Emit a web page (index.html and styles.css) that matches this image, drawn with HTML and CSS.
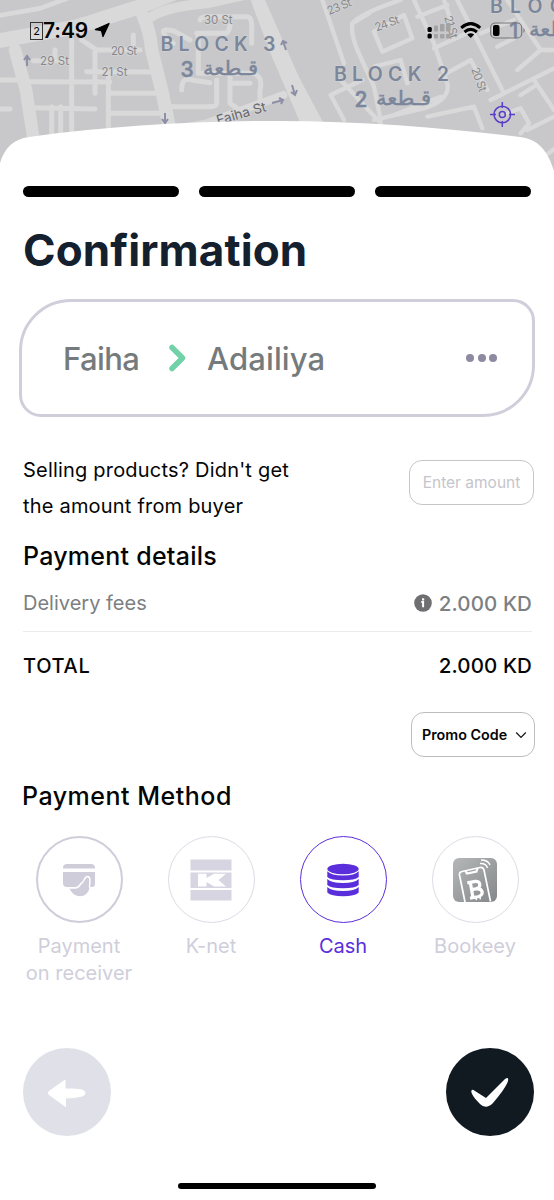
FILE: index.html
```html
<!DOCTYPE html>
<html lang="en">
<head>
<meta charset="utf-8">
<title>Confirmation</title>
<link rel="stylesheet" href="styles.css">
</head>
<body>
<main class="screen">
  <header class="map">
    <svg class="map-art" viewBox="0 0 554 176" width="554" height="176">
      <rect width="554" height="176" fill="#c8c8ca"/>
      <g transform="scale(.33333)" fill="none" stroke="#d9d9da" stroke-linecap="round" stroke-linejoin="round">
        <path stroke-width="44" d="M-20 125L230 80L420 20L520 -20"/>
        <path stroke-width="14" d="M-10 48L120 25L230 -15"/>
        <path stroke-width="38" d="M45 150L78 270L104 440"/>
        <path stroke-width="40" d="M430 50Q450 90 455 150L485 270L512 400"/>
        <path stroke-width="30" d="M455 50Q500 20 620 10L800 -30"/>
        <path stroke-width="24" d="M480 395L620 370L850 285"/>
        <path stroke-width="38" d="M770 -10L880 240L960 390"/>
        <path stroke-width="15" d="M0 240H80M100 182H200M215 120V420M165 180V150M245 60V120L290 150H420M285 155V280M260 215L470 216M90 245L330 246M90 323L285 327M155 320V430M182 320V430M325 230V410M325 280H470M330 340H490M400 105V145M0 327H30M520 130Q460 80 520 92L570 120M600 60Q600 50 625 50H740Q755 50 755 75V130M545 270Q545 230 575 240L630 248M650 240V310Q650 320 630 320H510M690 220V310L720 330M700 250H750M590 100H680Q690 90 690 70M760 220Q790 230 780 270V310M600 220H760M595 110V220"/>
      </g>
      <g transform="translate(274 0) scale(.33333)" fill="none" stroke="#d9d9da" stroke-linecap="round" stroke-linejoin="round">
        <path stroke-width="38" d="M-50 0L10 160L100 370"/>
        <path stroke-width="13" d="M145 0L210 190M200 240L320 370M170 285L265 240M170 285L210 360M285 40L235 70Q230 100 250 150L300 260L320 360M235 70Q260 40 380 0M300 95L390 45L415 115L325 155L300 95M420 0L480 130L520 250Q530 300 450 325L300 360M360 345L500 290M300 200L380 180L400 250M430 50L520 15M510 0L530 60M480 145L600 90M500 230L590 180L640 270M550 0L690 280M620 100L720 60M670 140L720 115M650 300L840 205M460 350L600 320L625 385M780 240L840 330M740 285L780 260M730 210L800 150H840M700 0L800 150M700 340L740 325L765 370L740 400M760 390L840 350M810 470L850 440"/>
      </g>
      <g class="street">
        <text x="40" y="64.500" textLength="29">29 St</text>
        <text x="111" y="54.500" textLength="26">20 St</text>
        <text x="101.500" y="75.500" textLength="26">21 St</text>
        <text x="204" y="23.500" textLength="28.500">30 St</text>
        <text transform="translate(329 15) rotate(-22)" textLength="25">23 St</text>
        <text transform="translate(376.500 31.500) rotate(-20)" textLength="25">24 St</text>
        <text transform="translate(444 17) rotate(73)" textLength="23">21 St</text>
        <text transform="translate(471 69) rotate(70)" textLength="25">20 St</text>
        <text class="street-main" transform="translate(218 125) rotate(-16)" textLength="51">Faiha St</text>
      </g>
      <g class="block">
        <text x="160.500" y="51" textLength="115">BLOCK 3</text>
        <text x="334" y="81" textLength="115">BLOCK 2</text>
        <text x="490" y="12.500" textLength="74">BLOC</text>
      </g>
      <g class="block-ar">
        <text class="num" x="180.500" y="77">3</text>
        <text x="203" y="75" textLength="55" lengthAdjust="spacingAndGlyphs">قـطعة</text>
        <text class="num" x="354.500" y="107">2</text>
        <text x="376" y="105" textLength="55" lengthAdjust="spacingAndGlyphs">قـطعة</text>
        <text class="num" x="509.500" y="38">1</text>
        <text x="529" y="36" textLength="55" lengthAdjust="spacingAndGlyphs">قـطعة</text>
      </g>
      <g fill="none" stroke="#8d8fa6" stroke-width="2">
        <path d="M27 66V56M24 60L27 56L30 60"/>
        <path d="M165 113V123M162 119L165 123L168 119"/>
        <path d="M286 50L283 41M281 45L283 41L287 43"/>
        <path d="M292 85L295 95M291 92L295 95L297 90"/>
        <path d="M272 103L283 100M279 98L283 100L281 104"/>
      </g>
      <g fill="none" stroke="#5a3dc8" stroke-width="1.500">
        <circle cx="502.300" cy="114.500" r="8.300"/><circle cx="502.300" cy="114.500" r="3"/>
        <path d="M502.300 102V108M502.300 121V127M490 114.500H496M509 114.500H515"/>
      </g>
      <path fill="#fff" d="M0 163C5 147 14 139 29 137C110 126 190 121 277 121C365 121 445 128 520 137C538 139 548 151 554 171V176H0Z"/>
    </svg>
    <div class="status">
      <span class="sim">2</span><span class="time">7:49</span>
      <svg class="status-icons" viewBox="0 0 554 50" width="554" height="50">
        <path d="M95.500 29.500L109 23.500L103 36.500L101.500 30.500Z" fill="#000" stroke="#000" stroke-width="1.300" stroke-linejoin="round"/>
        <g fill="#000"><rect x="427.500" y="27" width="4.300" height="5" rx="1.500"/><rect x="427.500" y="33.600" width="4.300" height="5" rx="1.500"/></g>
        <g fill="#a3a3a6"><rect x="434" y="25.500" width="4" height="6" rx="1"/><rect x="440" y="24" width="4.500" height="7.500" rx="1"/><rect x="446" y="23" width="4.500" height="8.500" rx="1"/><rect x="434" y="34" width="4" height="4.500" rx="1"/><rect x="440" y="34" width="4.500" height="4.500" rx="1"/><rect x="446" y="34" width="4.500" height="4.500" rx="1"/></g>
        <g fill="none" stroke="#000" stroke-width="3"><path d="M461.200 27.800Q470.700 19.500 480.200 27.800"/><path d="M464.500 32Q470.700 26.800 476.900 32"/></g>
        <path d="M467.200 34.500Q470.700 31.800 474.200 34.500L470.700 38Z"/>
        <rect x="490.700" y="23" width="31" height="15" rx="4.500" fill="none" stroke="#77777a" stroke-width="1.200"/>
        <rect x="493" y="25" width="6.500" height="11" rx="2"/>
        <path d="M523.500 28Q526 30.500 523.500 33Z" fill="#77777a"/>
      </svg>
    </div>
  </header>

  <div class="steps"><i></i><i></i><i></i></div>
  <h1 class="title">Confirmation</h1>

  <section class="route">
    <span class="from">Faiha</span>
    <svg class="chev" viewBox="0 0 20 30" width="20" height="30"><path d="M5 4.500L15.500 15L5 25.500" fill="none" stroke="#71d1a7" stroke-width="5.500" stroke-linecap="round" stroke-linejoin="round"/></svg>
    <span class="to">Adailiya</span>
    <span class="dots"><i></i><i></i><i></i></span>
  </section>

  <section class="selling">
    <p>Selling products? Didn't get<br>the amount from buyer</p>
    <div class="amount"><span>Enter amount</span></div>
  </section>

  <h2 class="heading details">Payment details</h2>
  <div class="row fees">
    <span class="fees-label">Delivery fees</span>
    <span class="value"><svg viewBox="0 0 18 18" width="18" height="18"><circle cx="9" cy="9" r="8.800" fill="#6f6f72"/><rect x="8" y="4.300" width="2.200" height="2.200" fill="#fff"/><path d="M7.300 8H9.100V13.200" fill="none" stroke="#fff" stroke-width="2"/></svg><b>2.000 KD</b></span>
  </div>
  <div class="row total">
    <span class="total-label">TOTAL</span>
    <span class="value"><b>2.000 KD</b></span>
  </div>
  <div class="promo-row">
    <div class="promo"><span>Promo Code</span><svg viewBox="0 0 12 8" width="12" height="8"><path d="M1.200 1.500L6 6.300L10.800 1.500" fill="none" stroke="#111" stroke-width="1.200"/></svg></div>
  </div>

  <h2 class="heading method">Payment Method</h2>
  <section class="methods">
    <div class="option">
      <div class="ring ring-strong">
        <svg viewBox="0 0 34 34" width="34" height="34"><path d="M1 5.500V5Q1 1 5 1H29Q33 1 33 5V5.500Z" fill="#cfcdda"/><path d="M1 9H33V21Q33 24 30 24H5Q1 24 1 20Z" fill="#cfcdda"/><path d="M7.500 25H13C16 25 17.500 23 19 20.500C22.500 19.500 22 13.500 25.500 13.500C28.500 13.500 28 17 27.500 22.500V24.500C26 36 11 36 7.500 25Z" fill="#cfcdda"/><path d="M8 25H13C16 25 17.500 23 19 20.500C22.500 19.500 22 13.500 25.500 13.500C28.500 13.500 28 17 27.500 24.500" fill="none" stroke="#fff" stroke-width="1.500"/></svg>
      </div>
      <span class="label">Payment<br>on receiver</span>
    </div>
    <div class="option">
      <div class="ring">
        <svg viewBox="0 0 42 42" width="42" height="42"><path d="M.5.500H41.500V11.500H.500ZM.500 13.500H41.500V29H.500ZM.500 31H41.500V41.500H.500Z" fill="#d7d5e1"/><path d="M8 14.700H16.500V19L24 14.700H36L28.500 21L36 27.500H24L16.500 23V27.500H8Z" fill="#fff"/></svg>
      </div>
      <span class="label">K-net</span>
    </div>
    <div class="option active">
      <div class="ring">
        <svg viewBox="0 0 34 34" width="34" height="34"><g fill="#5a2fdb"><ellipse cx="17" cy="6" rx="15.700" ry="5.200"/><path d="M1.300 8.300Q5 12.500 17 12.500T32.700 8.300V14Q29 17.300 17 17.300T1.300 14Z"/><path d="M1.300 16Q5 20 17 20T32.700 16V22Q29 25.300 17 25.300T1.300 22Z"/><path d="M1.300 24Q5 28 17 28T32.700 24V29.500Q29 33.300 17 33.300T1.300 29.500Z"/></g></svg>
      </div>
      <span class="label">Cash</span>
    </div>
    <div class="option">
      <div class="ring">
        <svg class="bookeey" viewBox="0 0 44 44" width="44" height="44"><defs><linearGradient id="g" x1="0" y1="0" x2="1" y2="1"><stop offset="0" stop-color="#b5b7b8"/><stop offset="1" stop-color="#85888a"/></linearGradient></defs><rect width="44" height="44" rx="6" fill="url(#g)"/><g fill="none" stroke="#fff" stroke-width="1.700"><path d="M12 44L6.500 17Q6 14 9 13.500L27 9.500Q30 9 31 12L37.500 43.500"/><path d="M12.500 13L14 15.500L23.500 13.500L24.500 10" stroke-width="2.200"/><path d="M27 5.500Q33 5 34.500 10M28 2Q35 2 37 7"  stroke-width="1.400"/></g><g transform="translate(22.500 31) rotate(-10)" fill="none" stroke="#fff" stroke-width="3.200"><path d="M-7 -7.500H1Q5 -7 5 -4Q5 -.500 1 0Q6 .500 6 4Q6 7.500 1 8H-7M-4 -7.500V8M-4 0H2"/><path d="M-1 8V11M3 7V11" stroke-width="1.500"/></g></svg>
      </div>
      <span class="label">Bookeey</span>
    </div>
  </section>

  <footer class="actions">
    <div class="fab back"><svg viewBox="0 0 88 88" width="88" height="88"><path d="M26 43.500L42 32V41Q52 40.500 59 42Q62 43 62 45Q62 47.500 59 48Q52 50 42.500 50V58.500L26 46.500Q24.500 45 26 43.500Z" fill="#fff" stroke="#fff" stroke-linejoin="round"/></svg></div>
    <div class="fab done"><svg viewBox="0 0 88 88" width="88" height="88"><path d="M25.500 42.500Q26 41 29 43L40 50L59 31Q63 28 62 33C60 39 53 48 47 55Q40 62 34 56C30 52 24 45 25.500 42.500Z" fill="#fff"/></svg></div>
  </footer>
  <div class="home"></div>
</main>
</body>
</html>
```
FILE: styles.css
```css
* { box-sizing: border-box; }
body { margin: 0; background: #fff; font-family: Inter, "Liberation Sans", sans-serif; color: #050505; }
.screen { width: 554px; height: 1200px; display: flex; flex-direction: column; overflow: hidden; background: #fff; }
h1, h2, p { margin: 0; }
svg { display: block; flex: none; }
.map { position: relative; height: 176px; flex: none; }
.status { position: absolute; inset: 0 0 auto 0; height: 50px; display: flex; padding: 22px 0 0 30px; }
.status-icons { position: absolute; left: 0; top: 0; }
.sim { width: 13px; height: 18px; border: 1px solid #333; font-size: 11px; line-height: 17px; text-align: center; }
.time { font-size: 21px; line-height: 17px; font-weight: 600; letter-spacing: -.1px; }
.street { font-size: 11.5px; fill: #87878b; stroke: #d5d5d7; stroke-width: 1.5px; paint-order: stroke; }
.street-main { font-size: 13.5px; fill: #66666a; }
.block { font-size: 19.5px; font-weight: 600; fill: #7b869b; stroke: #d5d5d7; stroke-width: 1px; paint-order: stroke; }
.block-ar { font-family: "DejaVu Sans", sans-serif; font-size: 20px; fill: #7b869b; stroke: #7b869b; stroke-width: .5px; }
.num { font-family: Inter, sans-serif; font-size: 21px; font-weight: 500; }

.steps { display: flex; gap: 20px; padding: 10px 23px 0; height: 21px; flex: none; }
.steps i { width: 156px; height: 11px; border-radius: 6px; background: #000; }
.title { margin: 25px 0 0 23px; height: 56px; font-size: 44px; line-height: 56px; font-weight: 700; letter-spacing: .1px; color: #14202e; white-space: nowrap; }
.route { margin: 21px 19px 0; height: 118px; flex: none; border: 3px solid #d0cedb; border-radius: 52px 22px 52px 22px; display: flex; align-items: center; padding: 0 35px 0 41px; font-size: 31px; font-weight: 500; color: #757b7c; }
.from { width: 104px; letter-spacing: -.6px; }
.chev { margin-right: 20px; }
.to { letter-spacing: .15px; }
.dots { display: flex; gap: 3.5px; margin-left: auto; }
.dots i { width: 8px; height: 8px; border-radius: 50%; background: #8d8aa1; }
.selling { margin: 34px 20px 0 23px; height: 74px; flex: none; display: flex; justify-content: space-between; font-size: 20px; line-height: 36px; letter-spacing: .2px; white-space: nowrap; }
.selling p { padding-top: 1px; }
.amount { margin-top: 9px; width: 125px; height: 45px; border: 1px solid #c6c6ca; border-radius: 13px; display: flex; align-items: center; justify-content: center; font-size: 15.5px; letter-spacing: 0; color: #c5c5cb; }
.heading { font-size: 25px; line-height: 32px; height: 32px; font-weight: 500; white-space: nowrap; }
.details { margin: 15px 0 0 23px; letter-spacing: .25px; }
.row { margin: 0 22px 0 23px; display: flex; justify-content: space-between; align-items: center; font-size: 20px; white-space: nowrap; }
.fees { height: 60px; padding-top: 3px; border-bottom: 1px solid #ebebeb; color: #7c8082; }
.total { height: 66px; }
.total-label { font-weight: 500; letter-spacing: .7px; padding-top: 1px; }
.value { display: flex; align-items: center; gap: 7px; }
.value b { font-size: 20.5px; font-weight: 500; letter-spacing: .1px; }
.promo-row { margin: 14px 19px 0; display: flex; justify-content: flex-end; }
.promo { width: 124px; height: 45px; border: 1px solid #bdbdc0; border-radius: 13px; display: flex; align-items: center; justify-content: space-between; padding: 0 7px 0 10px; font-size: 14.3px; font-weight: 600; white-space: nowrap; }
.method { margin: 23px 0 0 22px; letter-spacing: .5px; }
.methods { display: grid; grid-template-columns: repeat(4, 132px); margin: 24px 0 0 13px; height: 160px; }
.option { display: flex; flex-direction: column; align-items: center; color: #cfcedb; }
.ring { width: 87px; height: 87px; border: 1px solid #dddbe5; border-radius: 50%; display: flex; align-items: center; justify-content: center; }
.ring-strong { border: 2px solid #cfcdda; }
.active { color: #5a2fdb; }
.active .ring { border: 1.5px solid #5a2fdb; }
.label { margin-top: 10px; font-size: 20px; line-height: 27px; text-align: center; white-space: nowrap; }
.actions { display: flex; justify-content: space-between; margin: 52px 20px 0 23px; }
.fab { width: 88px; height: 88px; border-radius: 50%; }
.back { background: #e0e0e8; }
.done { background: #111921; }
.home { width: 198px; height: 6px; border-radius: 3px; background: #000; margin: 47px auto 0; }
```
